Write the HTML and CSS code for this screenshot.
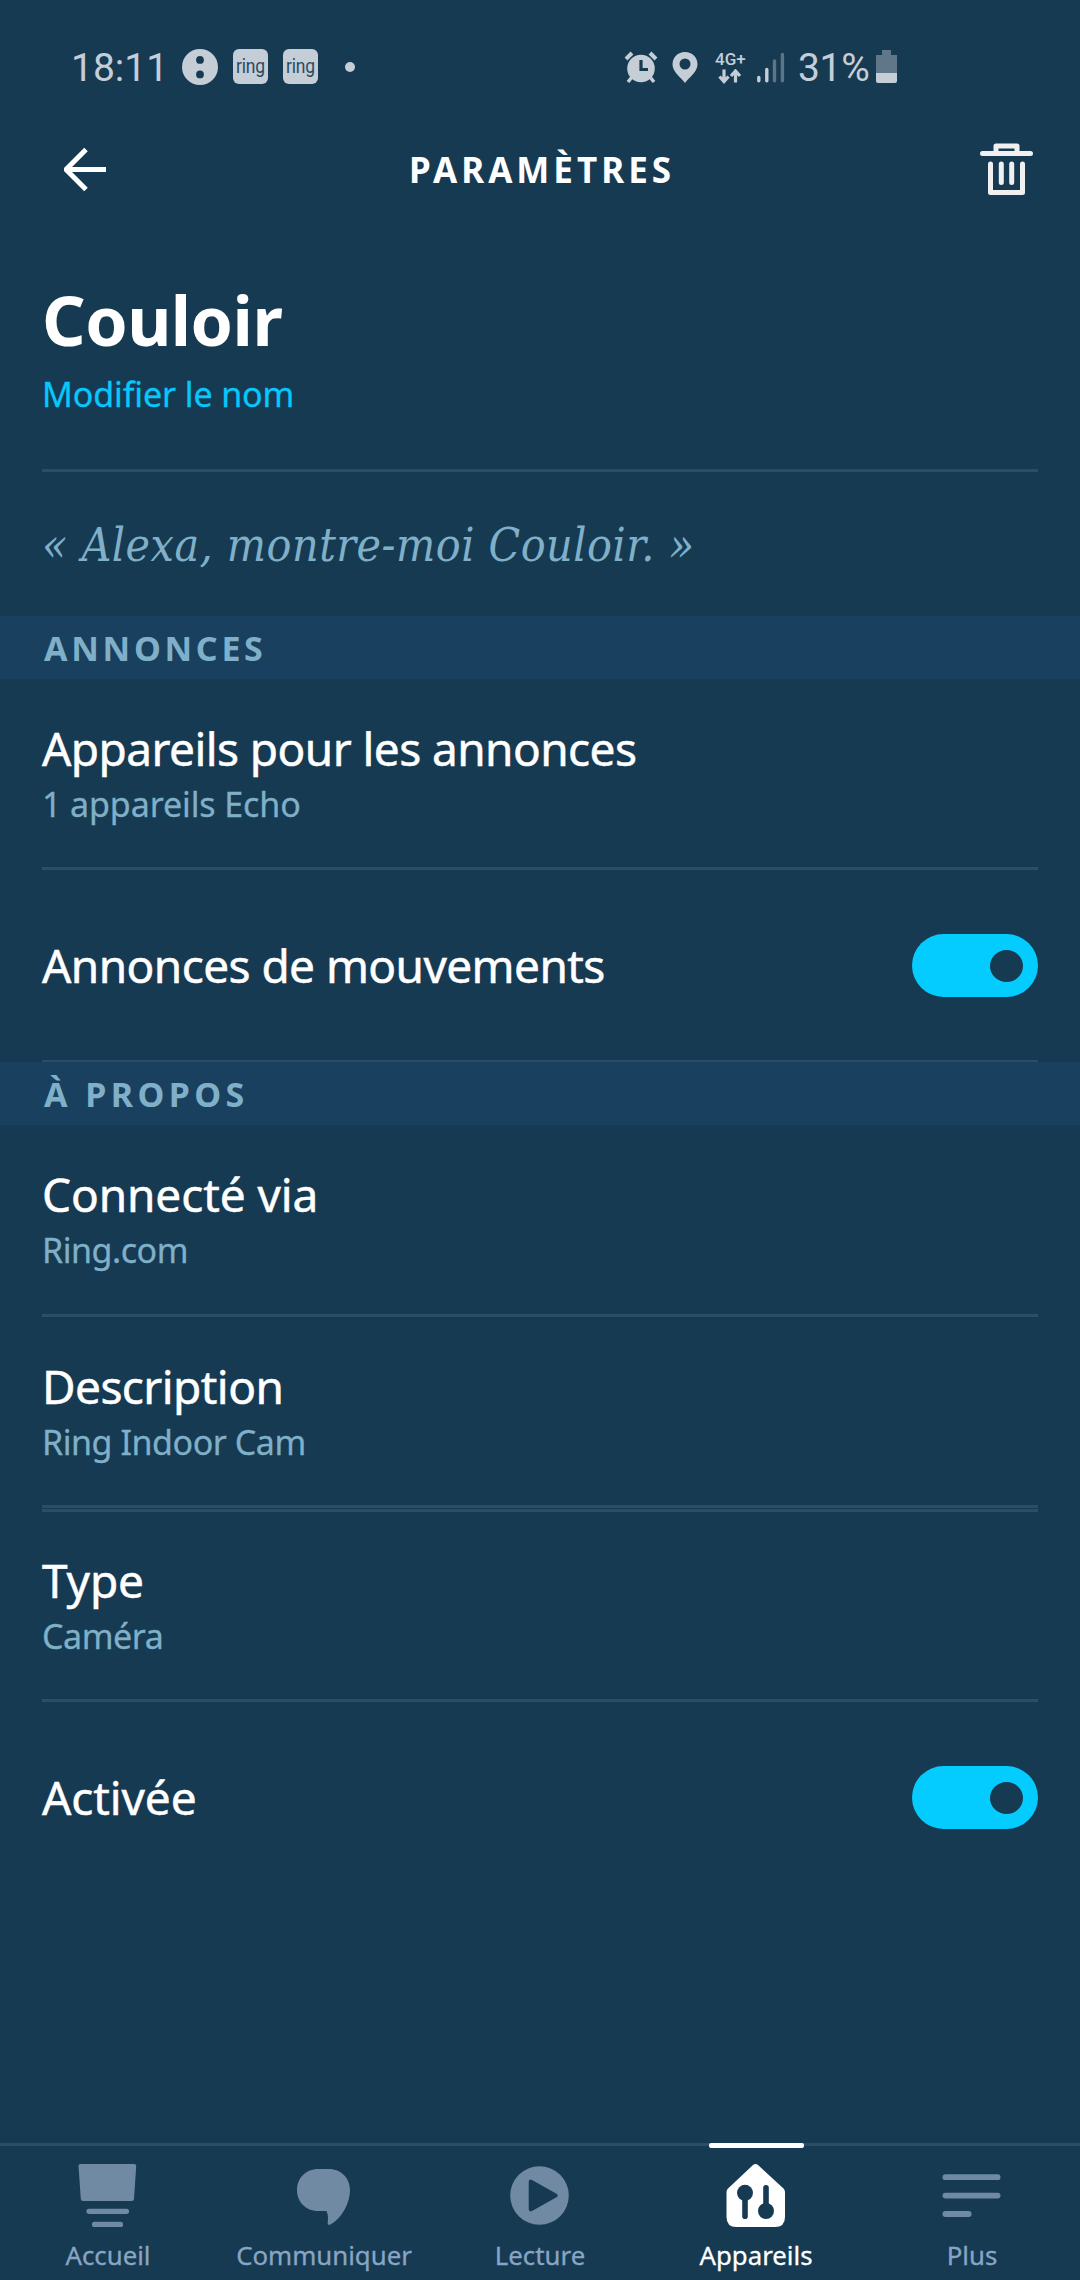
FILE: index.html
```html
<!DOCTYPE html>
<html lang="fr">
<head>
<meta charset="utf-8">
<title>Paramètres</title>
<link rel="stylesheet" href="styles.css">
</head>
<body>
<div class="app">
  <div class="status">
    <span class="time">18:11</span>
    <svg class="st-dots" width="36" height="38" viewBox="0 0 36 38"><path fill="currentColor" fill-rule="evenodd" d="M18 1a18 18 0 1 1 0 36a18 18 0 0 1 0-36zM18 8a3.9 3.9 0 1 0 0 7.800a3.900 3.900 0 0 0 0-7.800zM18 22.500a3.900 3.900 0 1 0 0 7.800a3.900 3.900 0 0 0 0-7.800z"/></svg>
    <span class="st-ring"><span class="ring-text">ring</span></span>
    <span class="st-ring"><span class="ring-text">ring</span></span>
    <svg class="st-more" width="10" height="38" viewBox="0 0 10 38"><circle cx="5" cy="19" r="5" fill="currentColor"/></svg>
    <svg class="st-alarm" width="34" height="38" viewBox="0 0 34 38">
      <circle cx="17" cy="20.500" r="13.800" fill="currentColor"/>
      <path d="M2 11 8 5M26 5l6 6" stroke="currentColor" stroke-width="4" fill="none"/>
      <path d="M8 29l-4 5M26 29l4 5" stroke="currentColor" stroke-width="3.500" fill="none"/>
      <path class="cut-line" d="M17 12v9.500h7"/>
    </svg>
    <svg class="st-pin" width="26" height="38" viewBox="0 0 26 38"><path fill="currentColor" fill-rule="evenodd" d="M13 4C6 4 .5 9.300.5 16.300.5 24 8.500 29 13 35c4.500-6 12.500-11 12.500-18.700C25.500 9.300 20 4 13 4zm0 6.500a5.500 5.500 0 1 1 0 11a5.500 5.500 0 0 1 0-11z"/></svg>
    <div class="network">
      <span class="net-label">4G+</span>
      <svg width="24" height="15" viewBox="0 0 24 15"><path d="M6 .5V12M1.500 7.500 6 12.500l4.500-5M17.500 13.500V2M13 7l4.500-5L22 7" fill="none" stroke="currentColor" stroke-width="3.200"/></svg>
    </div>
    <svg class="st-signal" width="28" height="38" viewBox="0 0 28 38"><g stroke="currentColor" stroke-width="3.400" stroke-linecap="round"><path d="M1.800 29.500v3.300M9.800 21.500v11.300"/><path opacity=".4" d="M17.500 13v19.800M25.400 6.500v26.300"/></g></svg>
    <span class="percent">31%</span>
    <svg class="st-battery" width="21" height="38" viewBox="0 0 21 38"><path opacity=".42" fill="currentColor" d="M6 2h9v5h6v18H0V7h6z"/><path fill="currentColor" d="M0 25h21v8a2 2 0 0 1-2 2H2a2 2 0 0 1-2-2z"/></svg>
  </div>

  <header class="header">
    <svg class="back" width="44" height="44" viewBox="0 0 44 44"><path d="M42 22.500H4M22 2.500 2 22.500l20 20" fill="none" stroke="#fff" stroke-width="5"/></svg>
    <h1 class="header-title">PARAMÈTRES</h1>
    <svg class="trash" width="53" height="54" viewBox="0 0 53 54"><g fill="none" stroke="#f0f0f0" stroke-width="5" stroke-linecap="round" stroke-linejoin="round"><path d="M2.500 11.500h48M16 10.500V4h21v6.500M10.500 22v28.500h32V22M21.300 22v18.500M31.700 22v18.500"/></g></svg>
  </header>

  <main class="content">
    <section class="hero">
      <h2 class="name">Couloir</h2>
      <a class="rename">Modifier le nom</a>
    </section>
    <p class="quote">« Alexa, montre-moi Couloir. »</p>

    <h3 class="band">ANNONCES</h3>
    <div class="row">
      <div class="label tight">Appareils pour les annonces</div>
      <div class="sub">1 appareils Echo</div>
    </div>
    <div class="row switch-row thin">
      <div class="label tight">Annonces de mouvements</div>
      <div class="toggle"><span class="knob"></span></div>
    </div>

    <h3 class="band wide">À PROPOS</h3>
    <div class="row tall">
      <div class="label">Connecté via</div>
      <div class="sub narrow">Ring.com</div>
    </div>
    <div class="row">
      <div class="label tight">Description</div>
      <div class="sub narrow">Ring Indoor Cam</div>
    </div>
    <div class="row doubled">
      <div class="label">Type</div>
      <div class="sub narrow">Caméra</div>
    </div>
    <div class="row switch-row last">
      <div class="label">Activée</div>
      <div class="toggle"><span class="knob"></span></div>
    </div>
  </main>

  <nav class="nav">
    <div class="tab">
      <svg width="80" height="76" viewBox="0 0 80 76"><path fill="currentColor" d="M12.500 4h53.800q2 0 1.900 2l-2.200 33q-.2 2-2.200 2H15q-2 0-2.200-2L10.500 6q0-2 2-2z"/><path d="M21 51.300h37.500M26.500 64.400h26" stroke="currentColor" stroke-width="5.200" stroke-linecap="round"/></svg>
      <span>Accueil</span>
    </div>
    <div class="tab">
      <svg width="80" height="76" viewBox="0 0 80 76"><path fill="currentColor" d="M34 9H45C57 9 66 18 66 30C66 43 58 58 46.500 64.500Q43.200 66 43.700 62.500Q44.800 56 42.500 51H34C22 51 13 42 13 30S22 9 34 9z"/></svg>
      <span>Communiquer</span>
    </div>
    <div class="tab">
      <svg width="80" height="76" viewBox="0 0 80 76"><path fill="currentColor" fill-rule="evenodd" d="M39.500 6.200a29.300 29.300 0 1 1 0 58.600a29.300 29.300 0 0 1 0-58.600zM28.700 22v27q.3 3.500 3.300 2L56.500 37.300q2.600-1.800 0-3.600L32 20q-3-1.500-3.300 2z"/></svg>
      <span>Lecture</span>
    </div>
    <div class="tab active">
      <svg width="80" height="76" viewBox="0 0 80 76"><path fill="currentColor" d="M37 5Q39.500 3 42 5L67.500 28.500Q69 30 69 32V57Q69 67 59 67H20.500Q10.500 67 10.500 57V32Q10.500 30 12 28.500z"/><g class="cut"><circle cx="29" cy="32.800" r="8"/><circle cx="50" cy="51" r="8"/><rect x="26.200" y="34" width="5.600" height="25" rx="2.800"/><rect x="47.200" y="25" width="5.600" height="25" rx="2.800"/></g></svg>
      <span>Appareils</span>
    </div>
    <div class="tab">
      <svg width="80" height="76" viewBox="0 0 80 76"><path d="M13.400 17.200h52.200M13.400 35.600h52.200M13.400 54h23.300" stroke="currentColor" stroke-width="5.800" stroke-linecap="round"/></svg>
      <span>Plus</span>
    </div>
  </nav>
</div>
</body>
</html>
```
FILE: styles.css
```css
* { box-sizing: border-box; }
body { margin: 0; background: #173a53; }
h1, h2, h3, p { margin: 0; }
svg { display: block; flex: none; }

.app {
  width: 1080px;
  height: 2280px;
  display: flex;
  flex-direction: column;
  background: #173a53;
  color: #fff;
  font-family: "Noto Sans", "Open Sans", sans-serif;
}

/* Status bar */
.status {
  height: 128px;
  padding: 48px 0 0 71px;
  display: flex;
  align-items: flex-start;
  color: #c5ced6;
  font-family: Roboto, sans-serif;
  font-size: 39px;
  line-height: 38px;
}
.time { width: 111px; padding-top: 1px; }
.st-dots { margin-right: 15px; }
.st-ring {
  width: 35px;
  height: 35px;
  margin: 1px 15px 0 0;
  border-radius: 6px;
  background: #c5ced6;
  display: flex;
  justify-content: center;
}
.ring-text {
  font-size: 17.5px;
  line-height: 34px;
  letter-spacing: -0.2px;
  color: #2c4a62;
  transform: scaleY(1.15);
}
.st-more { margin: 0 269px 0 12px; }
.cut-line { fill: none; stroke: #173a53; stroke-width: 3.2px; }
.st-pin { margin: 0 17px 0 14px; }
.network {
  width: 42px;
  padding-top: 3px;
  display: flex;
  flex-direction: column;
  gap: 2px;
}
.net-label { font-size: 17px; font-weight: 500; line-height: 16px; }
.network svg { margin-left: 3px; }
.percent { width: 78px; margin-left: 13px; letter-spacing: -0.3px; padding-top: 1px; white-space: nowrap; }

/* Header */
.header {
  height: 82px;
  padding: 0 47px 0 64px;
  display: grid;
  grid-template-columns: 1fr auto 1fr;
  align-items: center;
}
.header-title {
  padding-top: 2px;
  font-size: 35px;
  line-height: 50px;
  font-weight: 700;
  letter-spacing: 4px;
  margin-right: 13px;
}
.trash { justify-self: end; }

/* Settings list */
.content { flex: 1; }
.hero {
  margin: 0 42px;
  padding: 65px 0 53px;
  border-bottom: 3px solid #2d4d66;
}
.name {
  font-size: 68px;
  line-height: 90px;
  font-weight: 700;
  letter-spacing: -0.5px;
}
.rename {
  display: block;
  margin-top: 7px;
  font-size: 34px;
  line-height: 44px;
  letter-spacing: -0.1px;
  color: #05c8fc;
}
.quote {
  padding: 4px 42px 1px;
  font: italic 46px "DejaVu Serif", serif;
  font-stretch: 75%;
  line-height: 139px;
  letter-spacing: 0.5px;
  color: #7fb0c8;
}
.band {
  padding: 1px 0 0 44px;
  height: 63px;
  background: #1a4060;
  color: #7fb0c8;
  font-size: 34px;
  line-height: 63px;
  font-weight: 700;
  letter-spacing: 3.7px;
}
.band.wide { letter-spacing: 4.4px; }
.row {
  margin: 0 42px;
  padding: 39px 0 41px;
  border-bottom: 3px solid #2d4d66;
}
.row.tall { padding-bottom: 42px; }
.row.doubled { margin-top: 1px; padding-top: 38px; border-top: 3px solid #2d4d66; }
.label {
  font-size: 46px;
  line-height: 60px;
  letter-spacing: -0.1px;
  -webkit-text-stroke: 0.5px currentColor;
}
.label.tight { letter-spacing: -0.57px; }
.sub {
  margin-top: 4px;
  font-size: 34px;
  line-height: 44px;
  letter-spacing: -0.1px;
  color: #7fb0c8;
}
.sub, .rename { -webkit-text-stroke: 0.3px currentColor; }
.sub.narrow { letter-spacing: -0.45px; }
.switch-row {
  display: flex;
  align-items: center;
  justify-content: space-between;
  padding: 64px 0 63px;
}
.switch-row .label { margin-top: -2px; }
.thin { border-bottom-width: 2px; }
.last { border-bottom: 0; }
.toggle {
  width: 126px;
  height: 63px;
  padding-right: 15px;
  border-radius: 32px;
  background: #04ccff;
  display: flex;
  align-items: center;
  justify-content: flex-end;
}
.knob { width: 33px; height: 32px; border-radius: 50%; background: #173a53; }

/* Bottom navigation */
.nav {
  height: 137px;
  border-top: 3px solid #2d4d66;
  display: grid;
  grid-template-columns: repeat(5, 1fr);
}
.tab {
  position: relative;
  padding-top: 14px;
  display: flex;
  flex-direction: column;
  align-items: center;
  color: #6f8aa2;
}
.tab span {
  padding-top: 1px;
  font-size: 25.8px;
  line-height: 36px;
  color: #88a5c3;
  -webkit-text-stroke: 0.3px currentColor;
}
.tab.active, .tab.active span { color: #fff; }
.tab.active::before {
  content: "";
  position: absolute;
  top: -3px;
  left: 61px;
  width: 95px;
  height: 5px;
  border-radius: 2px;
  background: #fff;
}
.cut { fill: #173a53; }
```
